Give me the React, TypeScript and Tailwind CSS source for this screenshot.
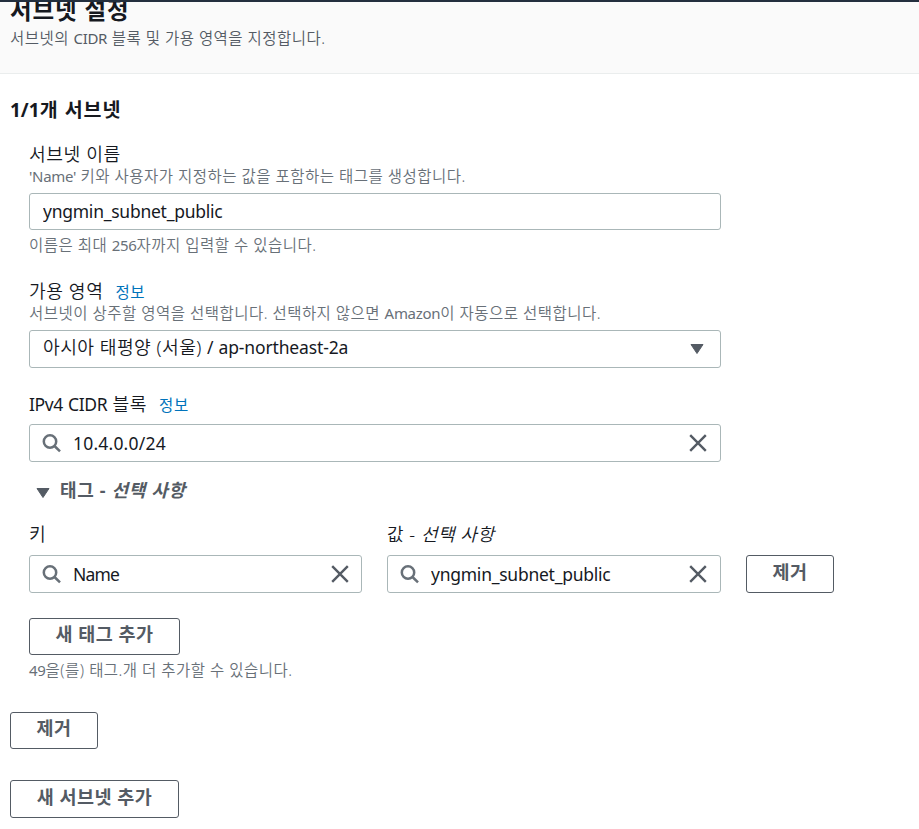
import { useState } from 'react';
import type { ReactNode } from 'react';
import clsx from 'clsx';

// Hangul runs are set a little looser than the Latin text around them
function Ko({ text, className }: { text: string; className: string }) {
  return (
    <>
      {text.split(/([A-Za-z0-9'/-]+)/).map((part, i) =>
        i % 2 ? part : <span key={i} className={className}>{part}</span>,
      )}
    </>
  );
}

function SearchIcon() {
  return (
    <svg width="20" height="20" viewBox="0 0 20 20" fill="none" stroke="#687078" strokeWidth="2.5" className="shrink-0">
      <circle cx="8" cy="8.5" r="6.2" />
      <path d="M12.5 13 L18 18.4" />
    </svg>
  );
}

function CloseIcon() {
  return (
    <svg width="18" height="18" viewBox="0 0 18 18" fill="none" stroke="#545b64" strokeWidth="2.4">
      <path d="M1.2 1.2 L16.8 16.8 M16.8 1.2 L1.2 16.8" />
    </svg>
  );
}

function CaretDown({ className }: { className?: string }) {
  return (
    <svg width="14" height="12" viewBox="0 0 14 12" fill="#545b64" stroke="#545b64" strokeWidth="1" strokeLinejoin="round" className={clsx('shrink-0', className)}>
      <path d="M1 1.5 H13 L7 10.5 Z" />
    </svg>
  );
}

function Hint({ text, className }: { text: string; className?: string }) {
  return (
    <p className={clsx('whitespace-nowrap text-[15px] leading-5 tracking-[-0.3px]', className ?? 'text-[#687078]')}>
      <Ko text={text} className="text-[15.5px] font-[350] tracking-[0.48px]" />
    </p>
  );
}

function Label({ text, children }: { text: string; children?: ReactNode }) {
  return (
    <div className="flex h-6 items-baseline whitespace-nowrap leading-6 tracking-[-0.4px]">
      <span>
        <Ko text={text} className="text-[18.2px] font-[350] tracking-[0.55px]" />
      </span>
      {children}
    </div>
  );
}

function InfoLink() {
  return <a href="#" className="ml-3 text-[15.5px] tracking-[0.6px] text-[#0073bb]">정보</a>;
}

function Button({ children, className }: { children: ReactNode; className?: string }) {
  return (
    <button
      type="button"
      className={clsx(
        'flex shrink-0 items-center justify-center whitespace-nowrap rounded-[3px] border border-[#545b64] bg-white pb-[5px] text-[18.5px] leading-6 font-bold tracking-[0.5px] text-[#545b64]',
        className,
      )}
    >
      {children}
    </button>
  );
}

function SearchField({ initial, label, className }: { initial: string; label: string; className?: string }) {
  const [value, setValue] = useState(initial);

  return (
    <div className={clsx('flex h-[38px] items-center rounded-[3px] border border-[#aab7b8] bg-white pl-3', className)}>
      <SearchIcon />
      <input
        aria-label={label}
        value={value}
        onChange={(e) => setValue(e.target.value)}
        className="ml-[11px] min-w-0 flex-1 pb-px leading-6 outline-none"
      />
      <button type="button" aria-label="지우기" onClick={() => setValue('')}>
        <CloseIcon />
      </button>
    </div>
  );
}

export default function App() {
  const [name, setName] = useState('yngmin_subnet_public');

  return (
    <div className="h-[829px] w-[919px] overflow-hidden bg-white font-['Noto_Sans','Noto_Sans_CJK_KR',sans-serif] text-[17.5px] text-[#16191f]">
      <header className="h-[74px] overflow-hidden border-b border-t-2 border-b-[#eaeded] border-t-[#232f3e] bg-[#fafafa] pl-2.5">
        <h2 className="-mt-1.5 h-[30px] text-[23.5px] leading-7 font-bold tracking-[0.9px]">서브넷 설정</h2>
        <Hint text="서브넷의 CIDR 블록 및 가용 영역을 지정합니다." className="mt-0.5 text-[#545b64]" />
      </header>

      <main className="pl-2.5 pt-6">
        <h3 className="h-6 text-[19px] leading-6 font-bold">
          <Ko text="1/1개 서브넷" className="text-[19.5px] tracking-[1px]" />
        </h3>

        <div className="flex w-[805px] flex-col pl-[19px] pt-5">
          <Label text="서브넷 이름" />
          <Hint text="'Name' 키와 사용자가 지정하는 값을 포함하는 태그를 생성합니다." />
          <input
            aria-label="서브넷 이름"
            value={name}
            onChange={(e) => setName(e.target.value)}
            className="mt-[7px] h-[37px] w-[692px] rounded-[3px] border border-[#aab7b8] px-[13px] pb-px tracking-[-0.25px] outline-none"
          />
          <Hint text="이름은 최대 256자까지 입력할 수 있습니다." className="mt-[5px] text-[#687078]" />

          <div className="mt-6">
            <Label text="가용 영역">
              <InfoLink />
            </Label>
          </div>
          <Hint text="서브넷이 상주할 영역을 선택합니다. 선택하지 않으면 Amazon이 자동으로 선택합니다." />
          <button
            type="button"
            className="mt-[7px] flex h-[38px] w-[692px] items-center justify-between rounded-[3px] border border-[#aab7b8] pl-[13px] pr-4"
          >
            <span className="pb-0.5 tracking-[-0.15px]">
              <Ko text="아시아 태평양 (서울) / ap-northeast-2a" className="text-[18.2px] font-[350] tracking-[0.45px]" />
            </span>
            <CaretDown />
          </button>

          <div className="mt-6">
            <Label text="IPv4 CIDR 블록">
              <InfoLink />
            </Label>
          </div>
          <SearchField label="IPv4 CIDR 블록" initial="10.4.0.0/24" className="mt-2 w-[692px] pr-[13px] tracking-[0.2px]" />

          <button type="button" className="mt-4 flex h-6 items-center gap-2.5 pl-[7px] text-[18px] leading-6 font-bold tracking-[0.65px] text-[#545b64]">
            <CaretDown className="mt-1.5" />
            <span>태그 - <em>선택 사항</em></span>
          </button>

          <div className="mt-5 flex items-end gap-[25px]">
            <div className="w-[333px] shrink-0">
              <Label text="키" />
              <SearchField label="키" initial="Name" className="mt-[9px] pr-3 tracking-[-0.8px]" />
            </div>
            <div className="w-[334px] shrink-0">
              <div className="h-6 text-[18px] font-[350] leading-6 tracking-[0.55px]">값 - <em>선택 사항</em></div>
              <SearchField label="값" initial="yngmin_subnet_public" className="mt-[9px] pr-[13px] tracking-[-0.25px]" />
            </div>
            <Button className="h-[38px] w-[88px]">제거</Button>
          </div>

          <Button className="mt-[25px] h-[37px] w-[151px]">새 태그 추가</Button>
          <Hint text="49을(를) 태그.개 더 추가할 수 있습니다." className="mt-[5px] text-[#687078]" />
        </div>

        <Button className="mt-8 h-[37px] w-[88px]">제거</Button>
        <Button className="mt-[31px] h-[38px] w-[169px]">새 서브넷 추가</Button>
      </main>
    </div>
  );
}
